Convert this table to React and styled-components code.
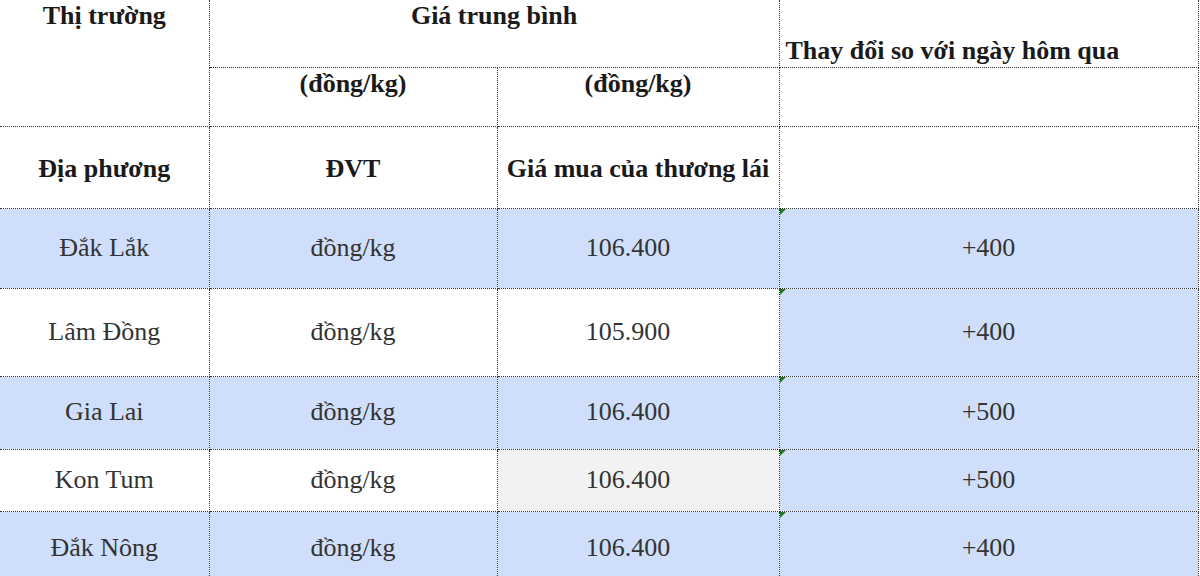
import React from 'react';
import styled, { createGlobalStyle, css } from 'styled-components';

const GlobalStyle = createGlobalStyle`
  body {
    margin: 0;
    background: #fff;
    font-family: "Liberation Serif", "Times New Roman", serif;
  }
`;

const Page = styled.div`
  width: 1200px;
  height: 576px;
  overflow: hidden;
  background: #fff;
`;

const Table = styled.table`
  width: 1198px;
  border-collapse: collapse;
  table-layout: fixed;
  font-size: 26px;
`;

const Row = styled.tr`
  height: ${({ h }) => h}px;
`;

const line = '1px dotted #333';

const HeadCell = styled.td`
  border-right: ${line};
  border-bottom: ${line};
  padding: ${({ valign }) =>
    valign === 'top' ? '2px 4px 0' : valign === 'bottom' ? '0 4px 1px 6px' : '5px 4px 0'};
  vertical-align: ${({ valign }) => valign || 'middle'};
  text-align: ${({ align }) => align || 'center'};
  font-weight: bold;
  color: #1a1a1a;
  white-space: nowrap;
  line-height: 1.1;
`;

const Cell = styled.td`
  position: relative;
  border-right: ${line};
  border-bottom: ${line};
  padding: ${({ shift }) => (shift ? '0 24px 0 4px' : '0 4px')};
  text-align: center;
  vertical-align: middle;
  color: #333;
  white-space: nowrap;
  line-height: 1.1;
  background: ${({ tone }) =>
    tone === 'blue' ? '#cfdffb' : tone === 'gray' ? '#f2f2f2' : '#ffffff'};

  ${({ flag }) =>
    flag &&
    css`
      &::before {
        content: '';
        position: absolute;
        top: 0;
        left: 0;
        border-top: 6px solid #1f7a1f;
        border-right: 6px solid transparent;
      }
    `}
`;

const rows = [
  { place: 'Đắk Lắk', price: '106.400', change: '+400', h: 80, tones: ['blue', 'blue', 'blue'] },
  { place: 'Lâm Đồng', price: '105.900', change: '+400', h: 88, tones: ['white', 'white', 'white'] },
  { place: 'Gia Lai', price: '106.400', change: '+500', h: 73, tones: ['blue', 'blue', 'blue'] },
  { place: 'Kon Tum', price: '106.400', change: '+500', h: 62, tones: ['white', 'white', 'gray'] },
  { place: 'Đắk Nông', price: '106.400', change: '+400', h: 74, tones: ['blue', 'blue', 'blue'] },
];

export default function App() {
  return (
    <>
      <GlobalStyle />
      <Page>
        <Table>
          <colgroup>
            <col style={{ width: 209 }} />
            <col style={{ width: 288 }} />
            <col style={{ width: 282 }} />
            <col style={{ width: 419 }} />
          </colgroup>
          <tbody>
            <Row h={67}>
              <HeadCell rowSpan={2} valign="top">Thị trường</HeadCell>
              <HeadCell colSpan={2} valign="top">Giá trung bình</HeadCell>
              <HeadCell valign="bottom" align="left">Thay đổi so với ngày hôm qua</HeadCell>
            </Row>
            <Row h={59}>
              <HeadCell valign="top">(đồng/kg)</HeadCell>
              <HeadCell valign="top">(đồng/kg)</HeadCell>
              <HeadCell />
            </Row>
            <Row h={82}>
              <HeadCell>Địa phương</HeadCell>
              <HeadCell>ĐVT</HeadCell>
              <HeadCell>Giá mua của thương lái</HeadCell>
              <HeadCell />
            </Row>
            {rows.map((r) => (
              <Row key={r.place} h={r.h}>
                <Cell tone={r.tones[0]}>{r.place}</Cell>
                <Cell tone={r.tones[1]}>đồng/kg</Cell>
                <Cell tone={r.tones[2]} shift>{r.price}</Cell>
                <Cell tone="blue" flag>{r.change}</Cell>
              </Row>
            ))}
          </tbody>
        </Table>
      </Page>
    </>
  );
}
